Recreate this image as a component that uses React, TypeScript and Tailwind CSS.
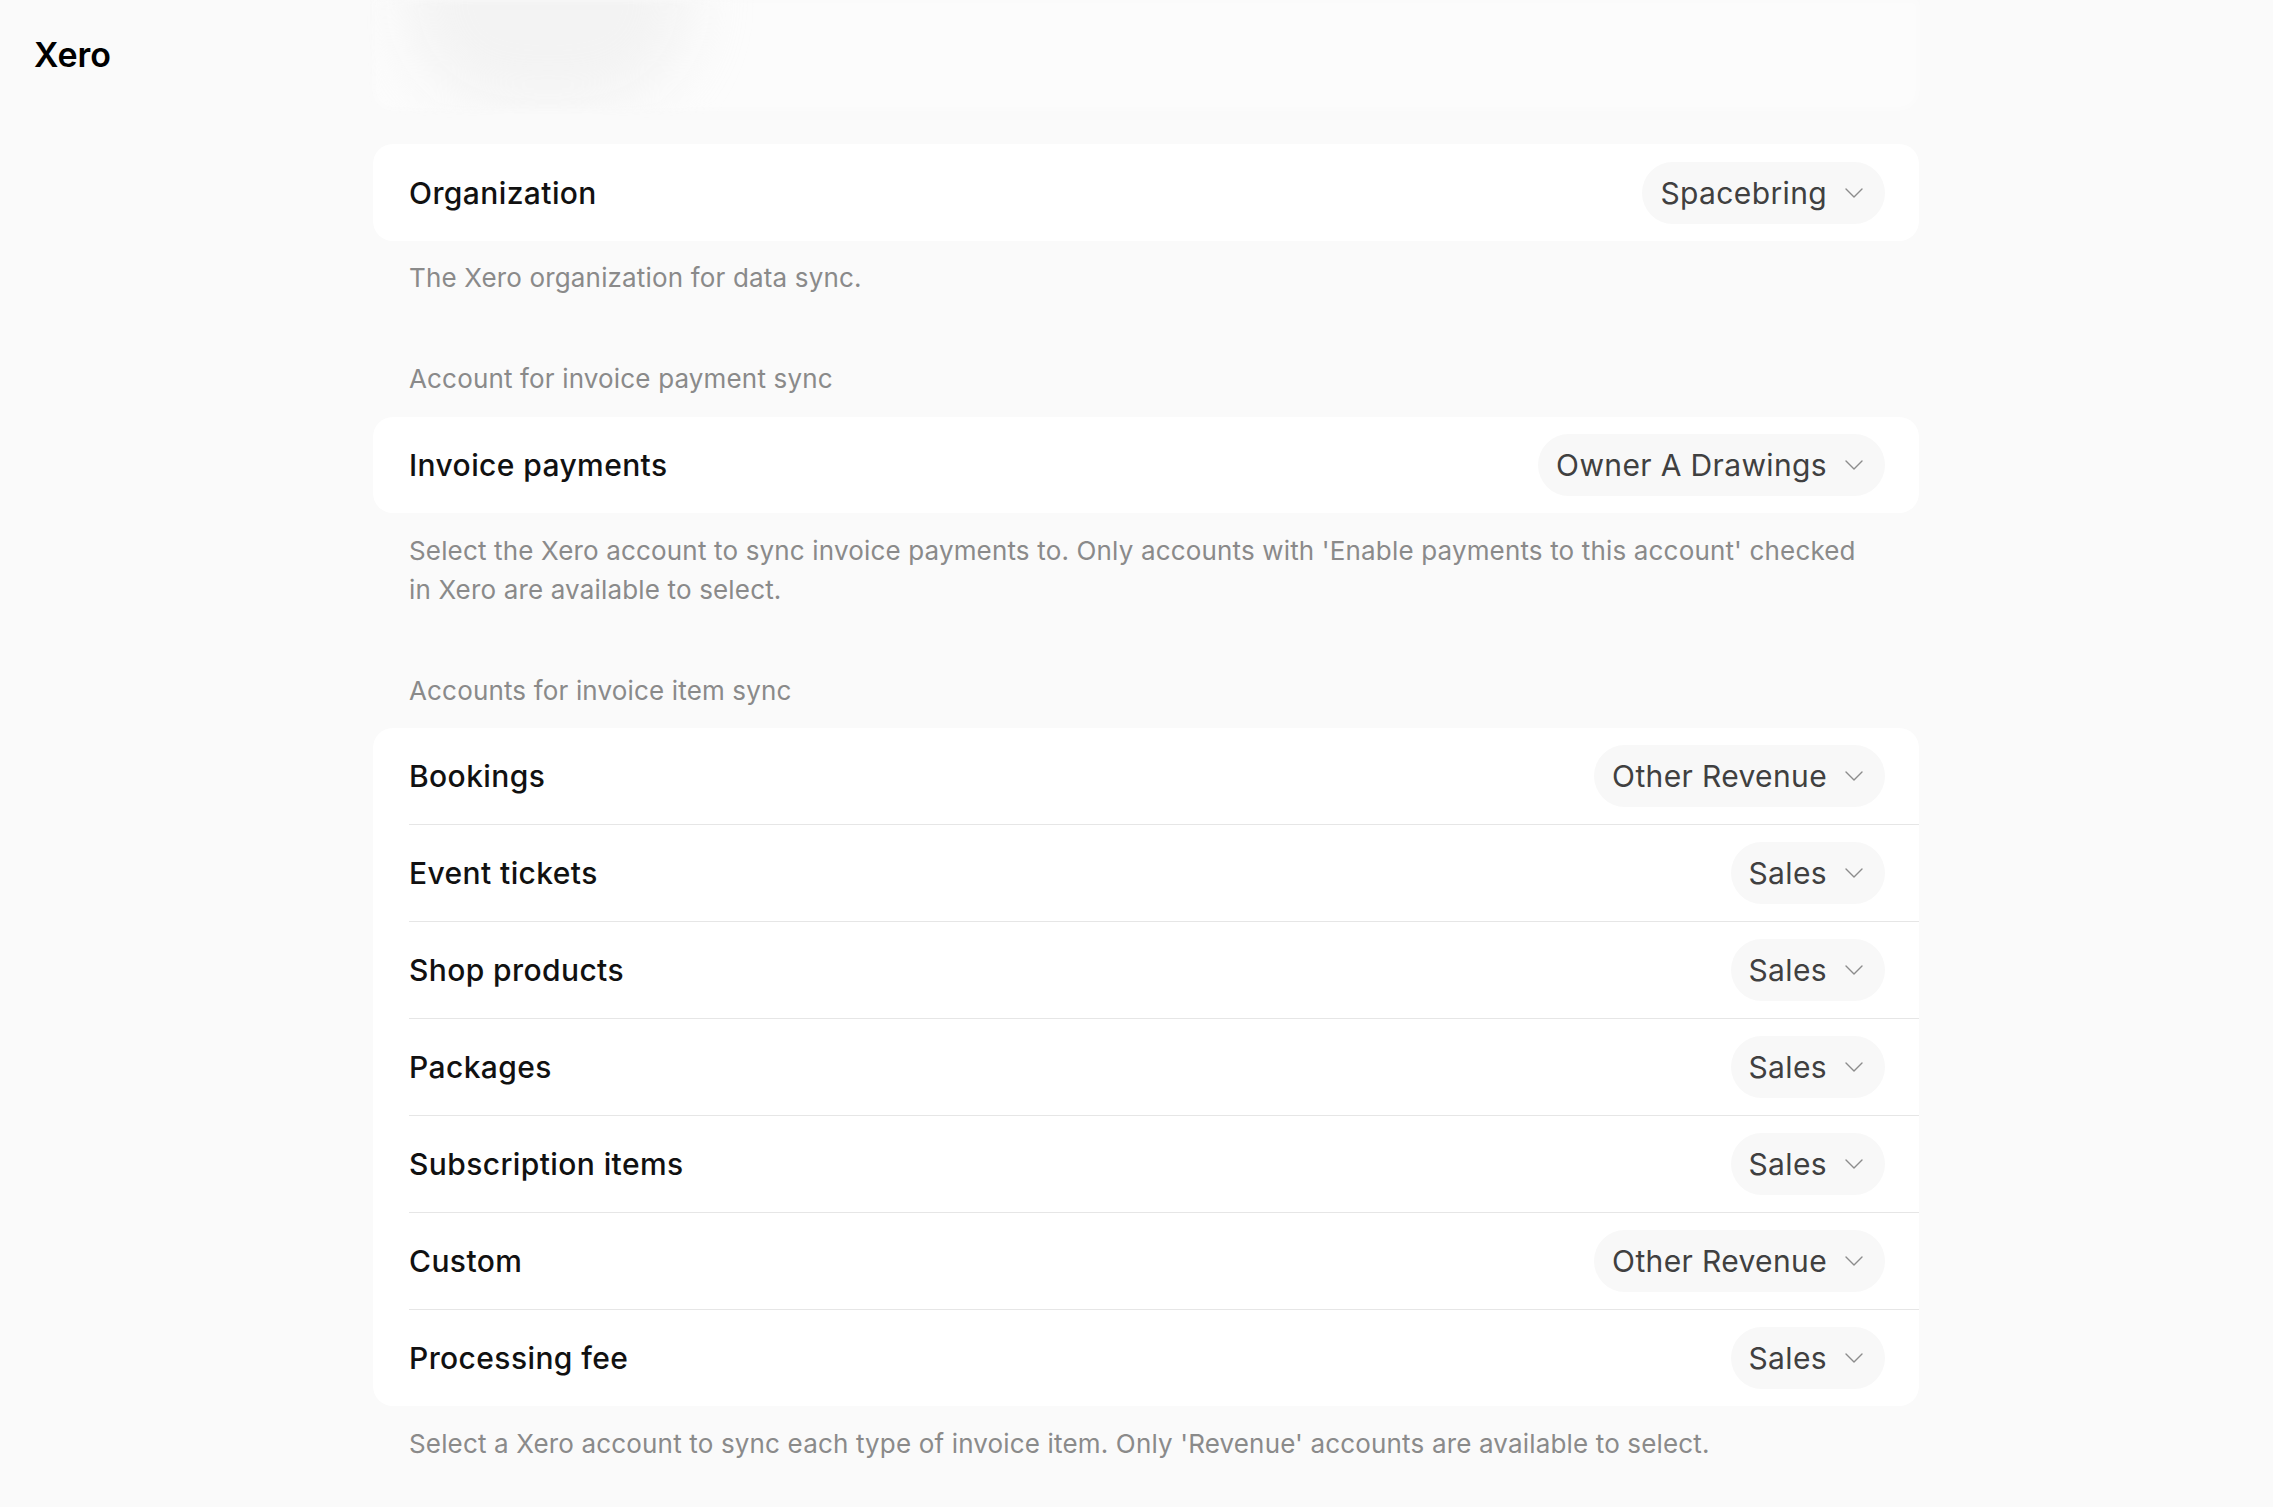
import React from "react";

function Chevron() {
  return (
    <svg width="18" height="10" viewBox="0 0 18 10" fill="none" className="shrink-0">
      <path d="M1 1L9 9L17 1" stroke="#8c8c8c" strokeWidth="1.4" strokeLinecap="round" strokeLinejoin="round" />
    </svg>
  );
}

function Pill({ value }: { value: string }) {
  return (
    <div className="flex h-[62px] items-center gap-[18px] rounded-full bg-[#f8f8f8] pl-[18px] pr-[22px]">
      <span className="text-[30px] leading-none tracking-[0.36px] text-[#404040]">{value}</span>
      <Chevron />
    </div>
  );
}

function Row({ label, value, last }: { label: string; value: string; last?: boolean }) {
  return (
    <div className={last ? "flex h-[96px] items-center justify-between pr-[34px]" : "flex h-[97px] items-center justify-between border-b border-[#e6e6e6] pr-[34px]"}>
      <span className="text-[30px] font-medium leading-none tracking-[0.4px] text-[#111111]">{label}</span>
      <Pill value={value} />
    </div>
  );
}

function Caption({ children, className = "" }: { children: React.ReactNode; className?: string }) {
  return <p className={"px-[36px] text-[26px] leading-[39px] tracking-[0.16px] text-[#8a8a8a] " + className}>{children}</p>;
}

export default function App() {
  const items: [string, string][] = [
    ["Bookings", "Other Revenue"],
    ["Event tickets", "Sales"],
    ["Shop products", "Sales"],
    ["Packages", "Sales"],
    ["Subscription items", "Sales"],
    ["Custom", "Other Revenue"],
    ["Processing fee", "Sales"],
  ];
  return (
    <div className="flex h-[1507px] w-full overflow-hidden bg-[#fafafa] font-[Inter,sans-serif]">
      <div className="w-[373px] shrink-0 pl-[34px] pt-[35px]">
        <h1 className="text-[34px] font-semibold leading-[40px] text-black">Xero</h1>
      </div>
      <div className="flex w-[1546px] shrink-0 flex-col">
        <div className="relative h-[110px] overflow-hidden rounded-b-[20px] bg-white/40 blur-[3px]">
          <div className="absolute left-[30px] top-[-110px] h-[220px] w-[290px] rounded-full bg-[#efefef]/70 blur-[30px]" />
        </div>

        <div className="mt-[34px] flex h-[97px] items-center justify-between rounded-[20px] bg-white pl-[36px] pr-[34px]">
          <span className="text-[30px] font-medium leading-none tracking-[0.4px] text-[#111111]">Organization</span>
          <Pill value="Spacebring" />
        </div>
        <Caption className="mt-[17px]">The Xero organization for data sync.</Caption>

        <Caption className="mt-[62px]">Account for invoice payment sync</Caption>
        <div className="mt-[19px] flex h-[96px] items-center justify-between rounded-[20px] bg-white pl-[36px] pr-[34px]">
          <span className="text-[30px] font-medium leading-none tracking-[0.4px] text-[#111111]">Invoice payments</span>
          <Pill value="Owner A Drawings" />
        </div>
        <Caption className="mt-[18px] pr-[40px]">
          Select the Xero account to sync invoice payments to. Only accounts with 'Enable payments to this account' checked in Xero are available to select.
        </Caption>

        <Caption className="mt-[62px]">Accounts for invoice item sync</Caption>
        <div className="mt-[18px] flex flex-col rounded-[20px] bg-white pl-[36px]">
          {items.map(([l, v], i) => (
            <Row key={l} label={l} value={v} last={i === items.length - 1} />
          ))}
        </div>
        <Caption className="mt-[18px]">
          Select a Xero account to sync each type of invoice item. Only 'Revenue' accounts are available to select.
        </Caption>
      </div>
    </div>
  );
}
